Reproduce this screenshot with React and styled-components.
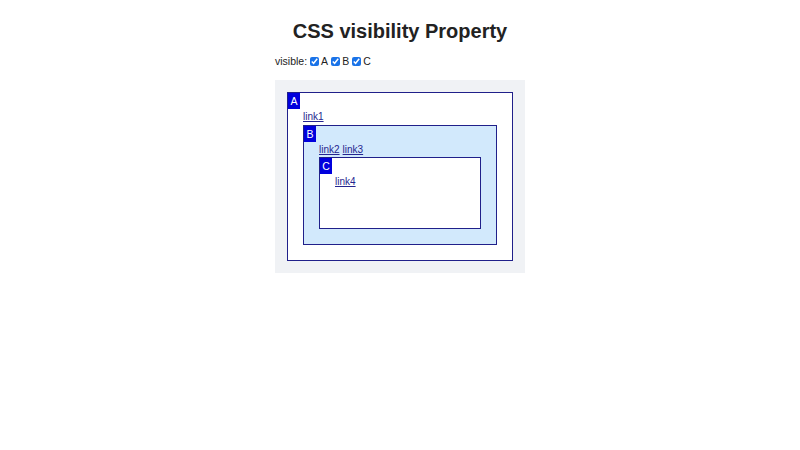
import React, { useState } from "react";
import styled, { createGlobalStyle } from "styled-components";

const GlobalStyle = createGlobalStyle`
  body {
    margin: 0;
    background: #ffffff;
    font-family: "Liberation Sans", Arial, sans-serif;
    color: #222222;
  }
`;

const Page = styled.div`
  width: 250px;
  margin: 0 auto;
  padding-top: 19px;
`;

const Title = styled.h1`
  margin: 0;
  font-size: 20px;
  font-weight: 700;
  line-height: 24px;
  text-align: center;
  color: #222222;
  white-space: nowrap;
`;

const Controls = styled.div`
  margin-top: 11px;
  display: flex;
  align-items: center;
  font-size: 10.5px;
  line-height: 14px;
  color: #222222;
`;

const Toggle = styled.label`
  display: flex;
  align-items: center;
  margin-left: 3px;
`;

const Check = styled.input`
  width: 9px;
  height: 9px;
  margin: 0 2px 0 0;
  accent-color: #1a73e8;
`;

const Panel = styled.div`
  margin-top: 12px;
  padding: 12px;
  background: #f0f2f5;
`;

const Box = styled.div`
  position: relative;
  border: 1px solid #20208a;
  padding: 15px;
  background: ${(p) => p.$bg};
  min-height: ${(p) => p.$minHeight || 0}px;
  visibility: ${(p) => (p.$visible ? "visible" : "hidden")};
`;

const Tag = styled.span`
  position: absolute;
  top: 0;
  left: 0;
  width: 12px;
  height: 16px;
  background: #0000dd;
  color: #ffffff;
  font-size: 10.5px;
  line-height: 16px;
  text-align: center;
`;

const Links = styled.div`
  font-size: 10px;
  line-height: 15px;
  padding-top: 1px;
  display: flex;
  gap: 3px;
  margin-bottom: ${(p) => p.$after || 0}px;
`;

const Link = styled.a`
  color: #25258f;
  text-decoration: underline;
`;

export default function App() {
  const [visible, setVisible] = useState({ A: true, B: true, C: true });
  const flip = (k) => setVisible({ ...visible, [k]: !visible[k] });

  return (
    <>
      <GlobalStyle />
      <Page>
        <Title>CSS visibility Property</Title>
        <Controls>
          visible:
          {["A", "B", "C"].map((k) => (
            <Toggle key={k}>
              <Check type="checkbox" checked={visible[k]} onChange={() => flip(k)} />
              {k}
            </Toggle>
          ))}
        </Controls>
        <Panel>
          <Box $bg="#ffffff" $visible={visible.A}>
            <Tag>A</Tag>
            <Links $after={1}>
              <Link href="#">link1</Link>
            </Links>
            <Box $bg="#d2e9fc" $visible={visible.B}>
              <Tag>B</Tag>
              <Links>
                <Link href="#">link2</Link>
                <Link href="#">link3</Link>
              </Links>
              <Box $bg="#ffffff" $visible={visible.C} $minHeight={40}>
                <Tag>C</Tag>
                <Links>
                  <Link href="#">link4</Link>
                </Links>
              </Box>
            </Box>
          </Box>
        </Panel>
      </Page>
    </>
  );
}
